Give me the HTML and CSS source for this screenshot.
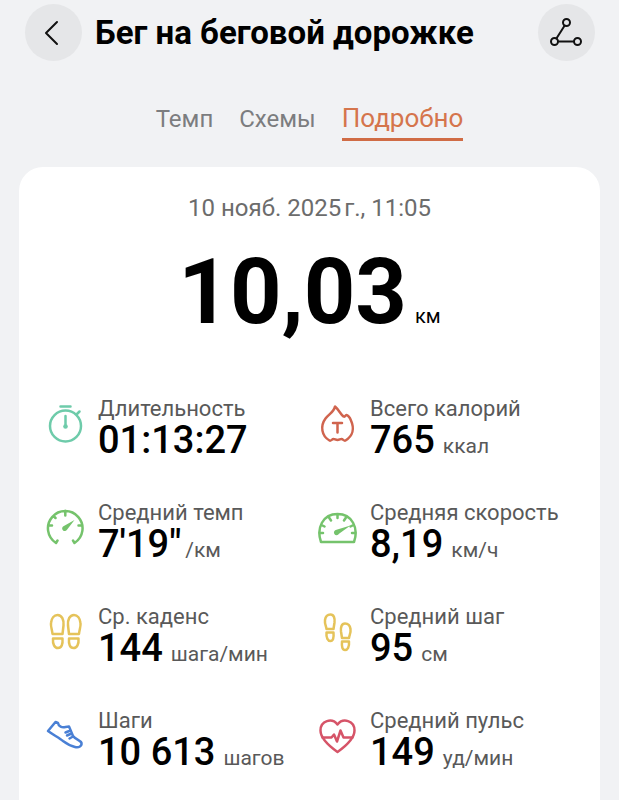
FILE: index.html
```html
<!DOCTYPE html>
<html lang="ru">
<head>
    <meta charset="UTF-8">
    <meta name="viewport" content="width=device-width, initial-scale=1.0">
    <title>Бег на беговой дорожке</title>
    <link rel="stylesheet" href="styles.css">
</head>
<body>
    <header class="header">
        <button type="button" class="round-button" aria-label="Назад">
            <svg width="57" height="57" viewBox="0 0 57 57"><path d="M32 18 21 29l11 11"/></svg>
        </button>
        <h1>Бег на беговой дорожке</h1>
        <button type="button" class="round-button" aria-label="Маршрут">
            <svg width="57" height="57" viewBox="0 0 57 57">
                <circle cx="28.5" cy="18.5" r="3.5"/>
                <circle cx="16.5" cy="37.5" r="3.5"/>
                <circle cx="39.5" cy="37.5" r="3.5"/>
                <path d="M26.7 21.5 18.4 34.5M20 37.5H36"/>
            </svg>
        </button>
    </header>

    <nav class="tabs">
        <a href="#">Темп</a>
        <a href="#">Схемы</a>
        <a href="#" class="active">Подробно</a>
    </nav>

    <main class="card">
        <p class="date">10 нояб. 2025&#8239;г., 11:05</p>
        <p class="distance">10,03<span>км</span></p>

        <div class="stats">
            <div class="stat">
                <svg class="icon teal" viewBox="0 0 40 40">
                    <circle cx="19.5" cy="22" r="15.5"/>
                    <path d="M14.500 2.500h10M31 10l2.500-2.500M19.500 12v10"/>
                    <circle class="fill" cx="19.5" cy="22.5" r="2.3"/>
                </svg>
                <div>
                    <p class="label">Длительность</p>
                    <p class="value">01:13:27</p>
                </div>
            </div>
            <div class="stat">
                <svg class="icon red" viewBox="0 0 40 40">
                    <path d="M17 2.500C16 8 11.500 9.500 7.500 14.500 2 22 3.500 32 11.500 36.500c1.500.8 2.500-1.500 4-1.500s2 1 4 1 2.500-1 4-1 2.500 2.300 4 1.500C35 32 36.500 24.500 33 16.500c-1-2.500-2.500-5-4.500-5.500-1.500 0-1 2.500-3 1.500C22.500 10 21 6 17 2.500z"/>
                    <path d="M15 19h9M19.500 19v9.500"/>
                </svg>
                <div>
                    <p class="label">Всего калорий</p>
                    <p class="value">765<span>ккал</span></p>
                </div>
            </div>
            <div class="stat">
                <svg class="icon green" viewBox="0 0 40 40">
                    <path d="M10 35A17.300 17.300 0 1 1 28.500 35M10 35l1.500-2.500M28.500 35 27 32.500M19.300 3v4.500M2.500 17.500H6M36 17.500h-3.500M7.500 8l2 2"/>
                    <path class="fill" d="M28.500 12 17 18.500a2.600 2.600 0 1 0 4 3.200z"/>
                </svg>
                <div>
                    <p class="label">Средний темп</p>
                    <p class="value tight">7'19"<span>/км</span></p>
                </div>
            </div>
            <div class="stat">
                <svg class="icon green" viewBox="0 0 40 40">
                    <path d="M3 34C-2 20 5 6 19.500 6s21.500 14 16.500 28zM19.500 6v4M11 9.500l2 3M28 9.500l-2 3M3.500 17l3 1.500M35.500 17l-3 1.500M1.500 25H5M37.500 25H34"/>
                    <path class="fill" d="M32.500 17.500 18.500 21.800a2.700 2.700 0 1 0 2.500 4z"/>
                </svg>
                <div>
                    <p class="label">Средняя скорость</p>
                    <p class="value">8,19<span>км/ч</span></p>
                </div>
            </div>
            <div class="stat">
                <svg class="icon yellow" viewBox="0 0 40 40">
                    <path d="M11.500 3c4.500 0 6.500 5 6 10.500L16.500 22H6.500C6 17 4.500 14.500 5 11c.5-4.500 3-8 6.500-8zM7 26.500h9.500c.5 6-1 9.500-4.500 9.500s-5.500-4-5-9.500zM28 3c-4.500 0-6.500 5-6 10.500l1 8.500h10c.5-5 2-7.500 1.500-11C34 6.500 31.500 3 28 3zM32.500 26.500H23c-.5 6 1 9.500 4.500 9.500s5.500-4 5-9.500z"/>
                </svg>
                <div>
                    <p class="label">Ср. каденс</p>
                    <p class="value">144<span>шага/мин</span></p>
                </div>
            </div>
            <div class="stat">
                <svg class="icon yellow" viewBox="0 0 40 40">
                    <path d="M12.500 2.500c3.500 0 4.500 4 4 8L15.500 17H8.500c-.5-3.500-2-5-1.500-9 .5-3.500 2.500-5.500 5.500-5.500zM8.500 20.500h7c.5 5.500-.5 8.500-3 8.500s-4.500-3-4-8.500zM27 11.500c-3.500 0-4.500 4-4 8l1 6.500h7c.5-3.500 2-5 1.500-9-.5-3.500-2.500-5.500-5.500-5.500zM31 29.500h-7c-.5 5.500.5 8.500 3 8.500s4.500-3 4-8.500z"/>
                </svg>
                <div>
                    <p class="label">Средний шаг</p>
                    <p class="value">95<span>см</span></p>
                </div>
            </div>
            <div class="stat">
                <svg class="icon blue" viewBox="0 0 40 40">
                    <path d="M2 15 9.500 6l2.500 1c.5 3.500 4 5 7.500 4l3.500-.5 4 9.500c2.500 3.500 7.500 4 8.500 7 .5 3-2.500 5-6.500 4-4.500-1-8-3-12-6C13.500 22 7.500 19 2 15zM19.500 16.500l5-2M21 19.500l4.500-2M23.500 22.500l3.500-2"/>
                </svg>
                <div>
                    <p class="label">Шаги</p>
                    <p class="value">10 613<span>шагов</span></p>
                </div>
            </div>
            <div class="stat">
                <svg class="icon pink" viewBox="0 0 40 40">
                    <path d="M19.500 36C9 28.500 2.500 22 2.500 14.500 2.500 4.500 14 1.500 19.500 8.500 25 1.500 36.500 4.500 36.500 14.500 36.500 22 30 28.500 19.500 36z"/>
                    <path d="M4.500 21.500h9l2.500-3 3 7 3.500-11 3 7H34.500"/>
                </svg>
                <div>
                    <p class="label">Средний пульс</p>
                    <p class="value">149<span>уд/мин</span></p>
                </div>
            </div>
        </div>
    </main>
</body>
</html>
```
FILE: styles.css
```css
* {
    box-sizing: border-box;
}
body {
    font-family: Roboto, "Noto Sans", sans-serif;
    margin: 0;
    background-color: #f1f2f4;
    color: #000;
}
h1, p {
    margin: 0;
}
svg {
    display: block;
    fill: none;
    stroke: currentColor;
    stroke-width: 2;
    stroke-linecap: round;
    stroke-linejoin: round;
}
.header {
    display: flex;
    align-items: center;
    gap: 13px;
    padding: 4px 24px 0 25px;
}
.header h1 {
    flex: 1;
    font-size: 33px;
    line-height: 40px;
    font-weight: 700;
    white-space: nowrap;
}
.round-button {
    flex: none;
    width: 57px;
    height: 57px;
    padding: 0;
    border: 0;
    border-radius: 50%;
    background: #e5e6e8;
    color: #111;
}
.tabs {
    display: flex;
    justify-content: center;
    align-items: baseline;
    gap: 26px;
    padding: 40px 0 26px;
}
.tabs a {
    color: #7c7d7f;
    font-size: 24px;
    line-height: 34px;
    text-decoration: none;
}
.tabs a.active {
    padding-bottom: 3px;
    border-bottom: 3px solid #d06c45;
    color: #d5754c;
    font-size: 26px;
}
.card {
    min-height: calc(100vh - 167px);
    margin: 0 19px;
    padding: 26px 10px 0 27px;
    border-radius: 24px 24px 0 0;
    background: #fff;
}
.date {
    padding-right: 17px;
    color: #6c6c6c;
    font-size: 24px;
    line-height: 30px;
    text-align: center;
}
.distance {
    padding-right: 17px;
    margin: 20px 0 53px;
    font-size: 90px;
    line-height: 100px;
    font-weight: 700;
    text-align: center;
}
.distance span {
    margin-left: 8px;
    font-size: 20px;
    line-height: 20px;
    font-weight: 400;
}
.stats {
    display: grid;
    grid-template-columns: 1fr 1fr;
    gap: 42px 0;
}
.stat {
    display: flex;
    gap: 12px;
    white-space: nowrap;
}
.icon {
    flex: none;
    width: 40px;
    height: 40px;
    margin-top: 8px;
    stroke-width: 2.5;
}
.fill {
    fill: currentColor;
    stroke: none;
}
.label {
    color: #595959;
    font-size: 22px;
    line-height: 26px;
}
.value {
    display: flex;
    align-items: baseline;
    gap: 8px;
    font-size: 38px;
    line-height: 36px;
    font-weight: 500;
}
.value.tight {
    gap: 4px;
}
.value span {
    color: #595959;
    font-size: 21px;
    line-height: 24px;
    font-weight: 400;
}
.teal {
    color: #6ecbaa;
}
.red {
    color: #d0644e;
}
.green {
    color: #75c36c;
}
.yellow {
    color: #e5c35a;
}
.blue {
    color: #4a80d5;
}
.pink {
    color: #d65468;
}
```
